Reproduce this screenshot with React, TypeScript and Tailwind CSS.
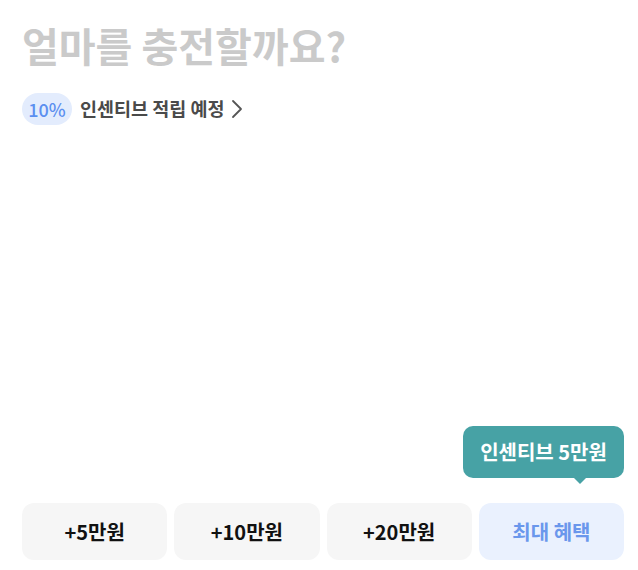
import React from "react";

const font = { fontFamily: '"Noto Sans CJK KR", "Noto Sans", sans-serif' };

export default function App() {
  const amounts = ["+5만원", "+10만원", "+20만원"];
  return (
    <div
      className="w-[638px] h-[570px] bg-white flex flex-col pl-[22px] pr-[14px] overflow-hidden"
      style={font}
    >
      <h1 className="mt-[17px] text-[40px] leading-[56px] font-bold text-[#cacaca]">
        얼마를 충전할까요?
      </h1>
      <div className="mt-[20px] flex items-center h-[32px]">
        <span className="h-[32px] w-[50px] rounded-full bg-[#e3ecfd] text-[#5b8ff0] text-[18px] font-medium flex items-center justify-center">
          10%
        </span>
        <span className="ml-[8px] text-[18.5px] font-bold text-[#4a4a4a]">인센티브 적립 예정</span>
        <svg className="ml-[5px]" width="14" height="22" viewBox="0 0 14 22" fill="none">
          <path d="M3 3 L11 11 L3 19" stroke="#555" strokeWidth="1.8" strokeLinecap="round" strokeLinejoin="round" />
        </svg>
      </div>
      <div className="flex-1" />
      <div className="flex justify-end">
        <div className="relative h-[52px] w-[161px] rounded-[10px] bg-[#47a2a5] text-white text-[20px] font-bold flex items-center justify-center">
          인센티브 5만원
          <span className="absolute left-[110px] bottom-[-6px] w-0 h-0 border-l-[7px] border-r-[7px] border-t-[7px] border-l-transparent border-r-transparent border-t-[#47a2a5]" />
        </div>
      </div>
      <div className="mt-[25px] mb-[10px] grid grid-cols-4 gap-[7px]">
        {amounts.map((a) => (
          <button
            key={a}
            className="h-[57px] rounded-[12px] bg-[#f6f6f6] text-[20px] font-bold text-[#111]"
          >
            {a}
          </button>
        ))}
        <button className="h-[57px] rounded-[12px] bg-[#eaf1fe] text-[20px] font-bold text-[#6a97ec]">
          최대 혜택
        </button>
      </div>
    </div>
  );
}
